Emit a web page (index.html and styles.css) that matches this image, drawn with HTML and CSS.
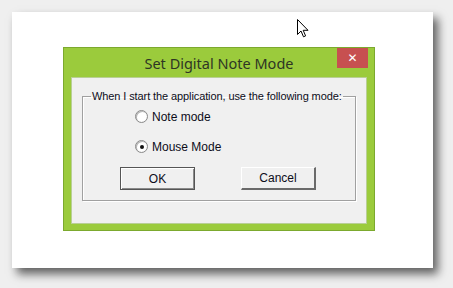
FILE: index.html
```html
<!DOCTYPE html>
<html>
<head>
<meta charset="utf-8">
<link rel="stylesheet" href="styles.css">
</head>
<body>
<div class="canvas">
  <div class="dialog">
    <div class="titlebar">
      <span class="title">Set Digital Note Mode</span>
      <div class="close">&#x2715;</div>
    </div>
    <div class="client">
      <fieldset class="group">
        <legend class="legend">When I start the application, use the following mode:</legend>
        <div class="options">
          <label class="option"><span class="radio"></span>Note mode</label>
          <label class="option"><span class="radio checked"></span>Mouse Mode</label>
        </div>
        <div class="buttons">
          <div class="btn default">OK</div>
          <div class="btn">Cancel</div>
        </div>
      </fieldset>
    </div>
  </div>
  <svg class="cursor" width="13" height="20" viewBox="0 0 13 20">
    <path d="M0.5 0.5 L0.5 15.5 L4 12 L6.5 17.8 L8.6 16.9 L6.2 11.3 L11 11.3 Z" fill="#fff" stroke="#000" stroke-width="1" stroke-linejoin="miter"/>
  </svg>
</div>
</body>
</html>
```

FILE: styles.css
```css
html, body {
  margin: 0;
  padding: 0;
}
body {
  background: #efefef;
  width: 453px;
  height: 288px;
  overflow: hidden;
  padding: 12px 0 0 12px;
  box-sizing: border-box;
  font-family: "Liberation Sans", Arial, sans-serif;
}
.canvas {
  position: relative;
  width: 421px;
  height: 256px;
  background: #fff;
  box-shadow: 5px 6px 9px rgba(0, 0, 0, 0.6);
  padding: 35px 0 0 51px;
  box-sizing: border-box;
}
.dialog {
  width: 312px;
  height: 184px;
  box-sizing: border-box;
  background: #9bcb3c;
  border: 1px solid #7ca92e;
  padding: 0 7px 6px 7px;
  display: flex;
  flex-direction: column;
}
.titlebar {
  position: relative;
  height: 29px;
  display: flex;
  align-items: center;
  justify-content: center;
  flex-shrink: 0;
}
.title {
  font-family: "Noto Sans", "Open Sans", sans-serif;
  font-size: 14.5px;
  color: #2e3524;
  margin-top: 1px;
}
.close {
  position: absolute;
  top: 0;
  right: -1px;
  width: 31px;
  height: 20px;
  background: #c75050;
  color: #fff;
  font-size: 12px;
  font-weight: bold;
  display: flex;
  align-items: center;
  justify-content: center;
  font-family: "DejaVu Sans", sans-serif;
}
.client {
  flex: 1;
  background: #f0f0f0;
  border: 1px solid #b9cf95;
  padding: 12px 10px 0 10px;
}
.group {
  margin: 0;
  border: 1px solid #a0a0a0;
  box-shadow: inset 1px 1px 0 #fff, 1px 1px 0 #fff;
  padding: 8px 0 10px 0;
  width: 274px;
  box-sizing: border-box;
}
.legend {
  font-size: 11px;
  color: #0d0d1a;
  padding: 0 1px;
  margin-left: 8px;
  letter-spacing: -0.1px;
}
.options {
  display: flex;
  flex-direction: column;
  gap: 17px;
  padding-left: 52px;
}
.option {
  display: flex;
  align-items: center;
  gap: 4px;
  font-size: 12px;
  color: #0d0d1a;
  height: 13px;
}
.radio {
  width: 11px;
  height: 11px;
  border-radius: 50%;
  border: 1px solid #8a8a8a;
  background: radial-gradient(circle, #fff 55%, #e4e4e4 100%);
  box-shadow: inset 1px 1px 0 #b8b8b8;
  position: relative;
}
.radio.checked::after {
  content: "";
  position: absolute;
  left: 3.5px;
  top: 3.5px;
  width: 4px;
  height: 4px;
  border-radius: 50%;
  background: #111;
}
.buttons {
  display: flex;
  justify-content: center;
  gap: 46px;
  margin-top: 14px;
  margin-left: -2px;
}
.btn {
  width: 75px;
  height: 23px;
  box-sizing: border-box;
  background: #f0f0f0;
  border-top: 1px solid #fff;
  border-left: 1px solid #fff;
  border-right: 2px solid #6a6a6a;
  border-bottom: 2px solid #6a6a6a;
  display: flex;
  align-items: center;
  justify-content: center;
  font-size: 12px;
  color: #0d0d1a;
}
.btn.default {
  border: 1px solid #555;
  box-shadow: inset 1px 1px 0 #fff, inset -1px -1px 0 #8a8a8a;
}
.cursor {
  position: absolute;
  left: 285px;
  top: 7px;
}
```
